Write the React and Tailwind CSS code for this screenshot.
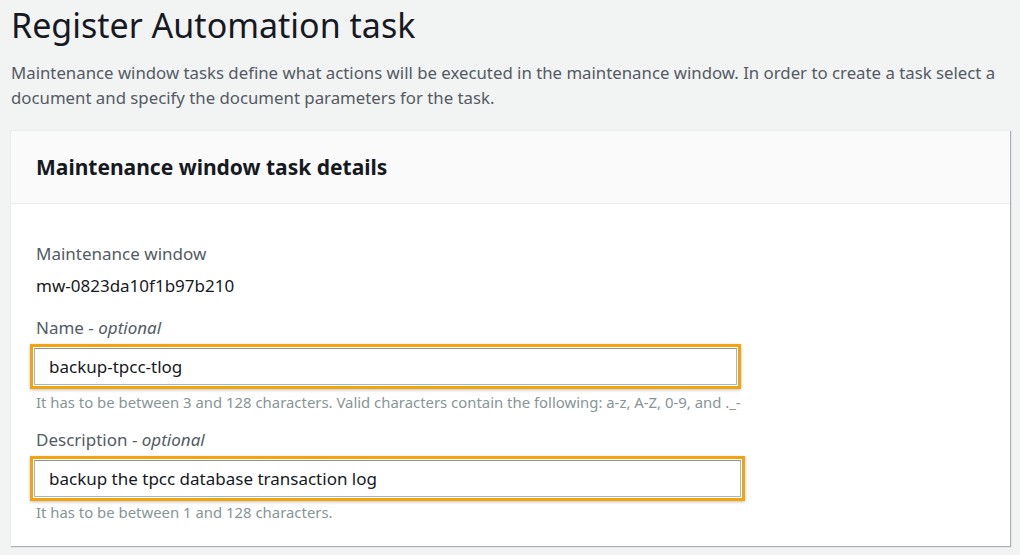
export default function App() {
  return (
    <div className="min-h-screen bg-[#f2f3f3] px-[10px] pt-[2px] font-['Noto_Sans',sans-serif] text-[#16191f]">
      <h1 className="pl-px text-[34px] leading-[46px] font-normal">Register Automation task</h1>
      <p className="mt-[12px] pl-px text-[16.8px] leading-[25px] text-[#545b64]">
        Maintenance window tasks define what actions will be executed in the maintenance window. In order to create a task select a
        document and specify the document parameters for the task.
      </p>

      <div className="mt-[20px] w-[1000px] bg-white border-l border-t border-[#eaeded] shadow-[1px_1px_1px_0_rgba(0,28,36,0.3)]">
        <div className="h-[73px] flex items-center px-[25px] bg-[#fafafa] border-b border-[#eaeded]">
          <h2 className="text-[21px] font-bold leading-[30px]">Maintenance window task details</h2>
        </div>

        <div className="px-[25px] pt-[38px] pb-[24px]">
          <div className="text-[17px] leading-[24px] text-[#545b64]">Maintenance window</div>
          <div className="mt-[8px] text-[17px] leading-[24px]">mw-0823da10f1b97b210</div>

          <div className="mt-[18px] text-[17px] leading-[24px] text-[#545b64]">
            Name - <i>optional</i>
          </div>
          <div className="mt-[4px] -ml-[6px] w-[711px] p-px bg-white border-[3px] border-[#f2a40f] shadow-[0_1px_3px_rgba(0,0,0,0.25)]">
            <input
              readOnly
              value="backup-tpcc-tlog"
              className="block w-full h-[37px] px-[14px] border border-[#aab7b8] border-t-[#8d9696] bg-white text-[17px] text-[#16191f] outline-none"
            />
          </div>
          <div className="mt-[3px] text-[14.9px] leading-[20px] text-[#879596]">
            It has to be between 3 and 128 characters. Valid characters contain the following: a-z, A-Z, 0-9, and ._-
          </div>

          <div className="mt-[16px] text-[17px] leading-[24px] text-[#545b64]">
            Description - <i>optional</i>
          </div>
          <div className="mt-[4px] -ml-[6px] w-[715px] p-px bg-white border-[3px] border-[#f2a40f] shadow-[0_1px_3px_rgba(0,0,0,0.25)]">
            <input
              readOnly
              value="backup the tpcc database transaction log"
              className="block w-full h-[37px] px-[14px] border border-[#aab7b8] border-t-[#8d9696] bg-white text-[17px] text-[#16191f] outline-none"
            />
          </div>
          <div className="mt-[1px] text-[14.9px] leading-[20px] text-[#879596]">
            It has to be between 1 and 128 characters.
          </div>
        </div>
      </div>
    </div>
  );
}
